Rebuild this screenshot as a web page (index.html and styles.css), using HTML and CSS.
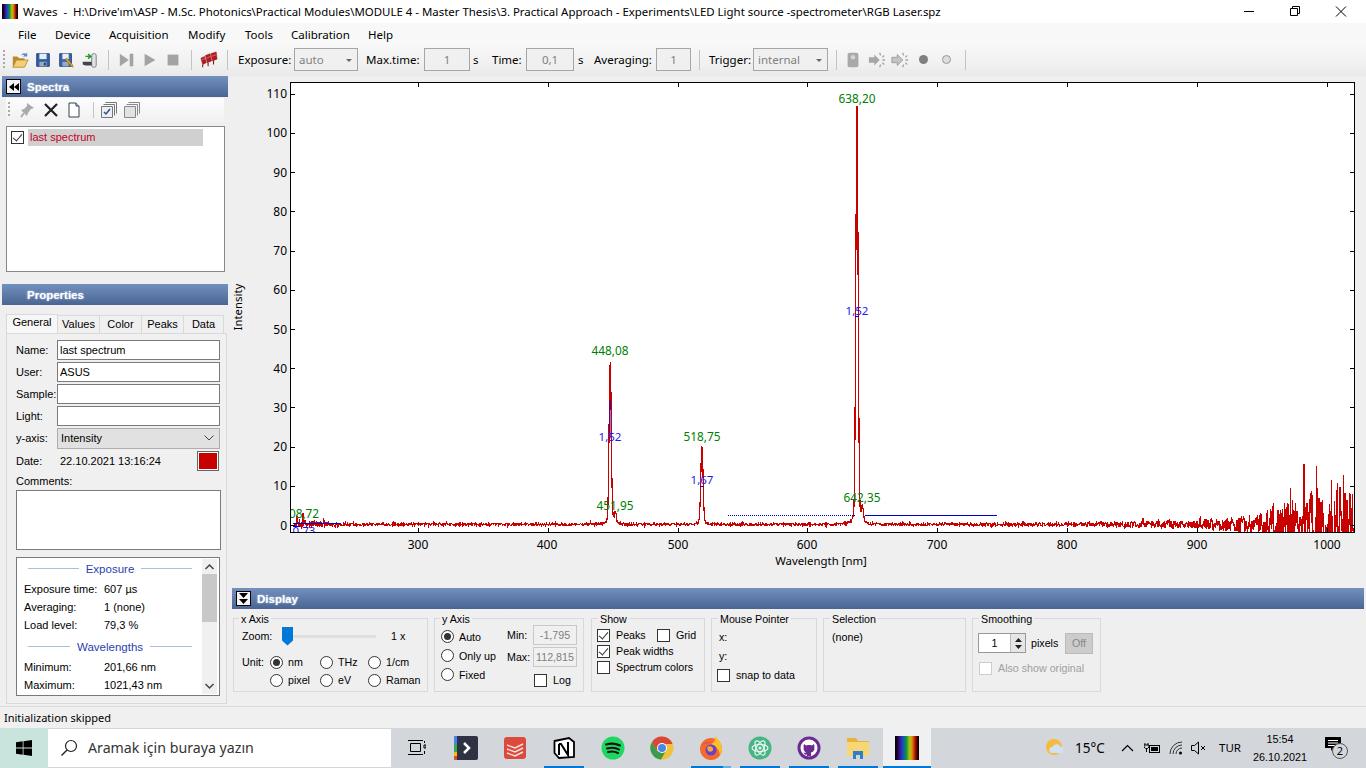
FILE: index.html
```html
<!DOCTYPE html>
<html lang="en">
<head>
<meta charset="utf-8">
<title>Waves</title>
<link rel="stylesheet" href="styles.css">
</head>
<body>
<div class="titlebar">
  <span class="rainbow app-icon"></span>
  <span class="title-text">Waves  -  H:\Drive'ım\ASP - M.Sc. Photonics\Practical Modules\MODULE 4 - Master Thesis\3. Practical Approach - Experiments\LED Light source -spectrometer\RGB Laser.spz</span>
  <div class="win-buttons">
    <svg width="46" height="22" viewBox="0 0 46 22"><path d="M18 10.5h10" stroke="#000" fill="none"/></svg>
    <svg width="46" height="22" viewBox="0 0 46 22"><path d="M18.5 7.5h7v7h-7zM20.5 7.5v-2h7v7h-2" stroke="#000" fill="none"/></svg>
    <svg width="46" height="22" viewBox="0 0 46 22"><path d="M18 5.5l10 10M28 5.5l-10 10" stroke="#000" fill="none"/></svg>
  </div>
</div>
<nav class="menubar">
  <span class="m-file">File</span><span class="m-device">Device</span><span class="m-acq">Acquisition</span><span class="m-mod">Modify</span><span class="m-tools">Tools</span><span class="m-cal">Calibration</span><span>Help</span>
</nav>
<div class="toolbar">
  <span class="grip"></span>
  <svg class="tb-icon first" viewBox="0 0 20 20"><path d="M2 6h5l2 2h6v2H6l-3 7H2z" fill="#b98a2e"/><path d="M6 10h13l-4 8H2z" fill="#f3cf78" stroke="#b98a2e"/><path d="M11 5c2-3 4-3 6-2l1-2v5h-5l2-1c-1-1-2-1-4 0z" fill="#5d87c9"/></svg>
  <svg class="tb-icon" viewBox="0 0 20 20"><path d="M3 3h14v14H3z" fill="#2f5fa8" stroke="#1c3e78"/><path d="M6 3h8v6H6z" fill="#e8eef8"/><path d="M6 12h8v5H6z" fill="#9ab"/><path d="M11 13h2v3h-2z" fill="#234"/></svg>
  <svg class="tb-icon" viewBox="0 0 20 20"><path d="M3 3h13v14H3z" fill="#3d66ac" stroke="#1c3e78"/><path d="M6 3h7v6H6z" fill="#e8eef8"/><path d="M6 12h7v5H6z" fill="#9ab"/><path d="M9 9l7 8 2 1-1-3-6-7z" fill="#e3a92d" stroke="#8a5a10" stroke-width=".6"/></svg>
  <svg class="tb-icon" viewBox="0 0 20 20"><rect x="13" y="3" width="5" height="15" rx="2" fill="#dfe3e6" stroke="#777"/><path d="M3 12h10v4H6l-3-1z" fill="#444"/><path d="M6 6h5M9 3.500l3 2.500-3 2.500" stroke="#1f9a2d" stroke-width="1.600" fill="none"/></svg>
  <span class="sep s1"></span>
  <svg class="tb-icon w-step" viewBox="0 0 20 20"><path d="M2 3l10 7-10 7z" fill="#a3a3a3"/><path d="M13 3h4v14h-4z" fill="#a3a3a3"/></svg>
  <svg class="tb-icon w-play" viewBox="0 0 20 20"><path d="M4 3l12 7-12 7z" fill="#a3a3a3"/></svg>
  <svg class="tb-icon w-stop" viewBox="0 0 20 20"><path d="M4 4h12v12H4z" fill="#a3a3a3"/></svg>
  <span class="sep s2"></span>
  <svg class="tb-icon w-red" viewBox="0 0 20 20"><g fill="#b31a1f" stroke="#7c1014" stroke-width=".5"><path d="M1 8l4-2 2 7-4 2z"/><path d="M6 5l5-2 2 8-5 2z"/><path d="M12 3l6-2 1 8-5 2z"/><path d="M3 15v3M9 13v4M15 11v4" fill="none" stroke-width="1.200"/></g><path d="M2 10l4-2M7 8l5-2M13 6l5-2" stroke="#e9686c"/></svg>
  <span class="sep s3"></span>
  <label class="tb-label l-exp">Exposure:</label>
  <span class="combo c-exp">auto</span>
  <label class="tb-label l-max">Max.time:</label>
  <span class="tb-input i-max">1</span>
  <span class="tb-label l-s1">s</span>
  <label class="tb-label l-time">Time:</label>
  <span class="tb-input i-time">0,1</span>
  <span class="tb-label l-s2">s</span>
  <label class="tb-label l-avg">Averaging:</label>
  <span class="tb-input i-avg">1</span>
  <span class="sep s4"></span>
  <label class="tb-label l-trig">Trigger:</label>
  <span class="combo c-trig">internal</span>
  <span class="sep s5"></span>
  <svg class="tb-icon w-dev" viewBox="0 0 20 20"><rect x="4" y="2" width="12" height="16" rx="2" fill="#a9a9a9"/><circle cx="10" cy="7" r="2.500" fill="#d6d6d6"/></svg>
  <svg class="tb-icon w-sun" viewBox="0 0 20 20"><path d="M1 7h6V4l6 6-6 6v-3H1z" fill="#a6a6a6"/><path d="M13 2l1 3M18 5l-2 2M19 10h-3M18 15l-2-2M13 18l1-3" stroke="#a6a6a6" stroke-width="1.500"/></svg>
  <svg class="tb-icon w-sun2" viewBox="0 0 20 20"><path d="M1 7h6V4l6 6-6 6v-3H1z" fill="#c4c4c4" stroke="#999"/><path d="M13 2l1 3M18 5l-2 2M19 10h-3M18 15l-2-2M13 18l1-3" stroke="#a6a6a6" stroke-width="1.500"/></svg>
  <span class="dot filled"></span>
  <span class="dot hollow"></span>
  <span class="sep s6"></span>
</div>

<main class="workspace">
  <aside class="leftcol">
    <header class="band"><span class="band-btn"><svg width="10" height="8" viewBox="0 0 10 8"><path d="M5 0v8L0 4zM10 0v8L5 4z" fill="#000"/></svg></span>Spectra</header>
    <div class="spectra-tools">
      <span class="grip small"></span>
      <svg class="st-icon" viewBox="0 0 18 18"><path d="M8 2l7 5-3 1-3 4-1 3-6-6 3-1 3-3z" fill="#aaa"/><path d="M5 12l-3 4" stroke="#aaa" stroke-width="2"/></svg>
      <svg class="st-icon" viewBox="0 0 18 18"><path d="M3 3l12 12M15 3L3 15" stroke="#222" stroke-width="2.200"/></svg>
      <svg class="st-icon" viewBox="0 0 18 18"><path d="M4 2h7l3 3v11H4z" fill="#fff" stroke="#345"/><path d="M11 2v3h3" fill="#cde" stroke="#345"/></svg>
      <span class="sep tall"></span>
      <svg class="st-icon" viewBox="0 0 18 18"><path d="M5.500 1.500h11v11M3.500 3.500h11v11" fill="none" stroke="#777"/><path d="M1.500 5.500h11v11h-11z" fill="#eee" stroke="#777"/><path d="M4 11l2 2 4-5" stroke="#2a4fa8" stroke-width="1.500" fill="none"/></svg>
      <svg class="st-icon" viewBox="0 0 18 18"><path d="M5.500 1.500h11v11M3.500 3.500h11v11" fill="none" stroke="#888"/><path d="M1.500 5.500h11v11h-11z" fill="#e2e2e2" stroke="#888"/></svg>
    </div>
    <div class="spectra-list">
      <div class="list-row"><span class="check checked dark"></span><span class="list-name">last spectrum</span></div>
    </div>
    <header class="band props-band"><span class="band-space"></span>Properties</header>
    <div class="tabs">
      <span class="tab active">General</span><span class="tab t-values">Values</span><span class="tab t-color">Color</span><span class="tab t-peaks">Peaks</span><span class="tab t-data">Data</span>
    </div>
    <div class="tab-panel">
      <div class="field"><label>Name:</label><span class="textbox">last spectrum</span></div>
      <div class="field"><label>User:</label><span class="textbox">ASUS</span></div>
      <div class="field"><label>Sample:</label><span class="textbox"></span></div>
      <div class="field"><label>Light:</label><span class="textbox"></span></div>
      <div class="field"><label>y-axis:</label><span class="selectbox">Intensity<svg width="10" height="6" viewBox="0 0 10 6"><path d="M.5.500L5 5 9.500.500" stroke="#444" fill="none"/></svg></span></div>
      <div class="field date-row"><label>Date:</label><span class="date-val">22.10.2021 13:16:24</span><span class="swatch"></span></div>
      <div class="comments-label">Comments:</div>
      <div class="comments"></div>
      <div class="infobox">
        <div class="info-body">
          <div class="info-head">Exposure</div>
          <div class="info-row"><span>Exposure time:</span><span>607 µs</span></div>
          <div class="info-row"><span>Averaging:</span><span>1 (none)</span></div>
          <div class="info-row"><span>Load level:</span><span>79,3 %</span></div>
          <div class="info-head second">Wavelengths</div>
          <div class="info-row"><span>Minimum:</span><span>201,66 nm</span></div>
          <div class="info-row"><span>Maximum:</span><span>1021,43 nm</span></div>
        </div>
        <div class="scrollbar">
          <svg width="15" height="16" viewBox="0 0 15 16"><path d="M3.500 10L7.500 6l4 4" stroke="#444" stroke-width="1.500" fill="none"/></svg>
          <span class="thumb"></span>
          <svg class="sb-down" width="15" height="16" viewBox="0 0 15 16"><path d="M3.500 6l4 4 4-4" stroke="#444" stroke-width="1.500" fill="none"/></svg>
        </div>
      </div>
    </div>
  </aside>

  <section class="rightcol">
    <div class="chart">
      <svg class="plot" width="1136" height="509" viewBox="230 76 1136 509">
        <defs><clipPath id="plotclip"><rect x="291" y="83" width="1063" height="449"/></clipPath></defs>
        <rect x="290.500" y="82.500" width="1064" height="450" fill="#fff"/>
        <g clip-path="url(#plotclip)">
          <path id="spectrum" fill="none" stroke="#c80000" stroke-width="1.200" shape-rendering="crispEdges"/>
          <path d="M728 515.500H855" stroke="#0000d0" stroke-dasharray="1 1" fill="none"/>
          <path d="M865 515.500H997M293 523.500H341M293 526.500H300" stroke="#0000d0" fill="none"/>
          <path d="M610 400.500v38M700.500 486.500h3M855 316.500h4" stroke="#0000d0" fill="none"/>
          <text class="pk" x="304" y="518">08,72</text>
          <text class="fw mid" x="304" y="535">0,73</text>
        </g>
        <path id="axes" fill="none" stroke="#000" shape-rendering="crispEdges"/>
        <rect x="290.500" y="82.500" width="1064" height="450" fill="none" stroke="#000" shape-rendering="crispEdges"/>
        <g class="ylabels">
          <text x="287" y="98">110</text><text x="287" y="137">100</text><text x="287" y="177">90</text><text x="287" y="216">80</text><text x="287" y="255">70</text><text x="287" y="294">60</text><text x="287" y="334">50</text><text x="287" y="373">40</text><text x="287" y="412">30</text><text x="287" y="451">20</text><text x="287" y="490">10</text><text x="287" y="530">0</text>
        </g>
        <g class="xlabels">
          <text x="418" y="549">300</text><text x="547" y="549">400</text><text x="678" y="549">500</text><text x="807" y="549">600</text><text x="937" y="549">700</text><text x="1067" y="549">800</text><text x="1197" y="549">900</text><text x="1327" y="549">1000</text>
        </g>
        <text class="axis-title" x="821" y="565">Wavelength [nm]</text>
        <text class="axis-title" transform="translate(242 307) rotate(-90)">Intensity</text>
        <text class="pk" x="857" y="103">638,20</text>
        <text class="pk" x="610" y="355">448,08</text>
        <text class="pk" x="702" y="441">518,75</text>
        <text class="pk" x="615" y="510">451,95</text>
        <text class="pk" x="862" y="502">642,35</text>
        <text class="fw mid" x="857" y="315">1,52</text>
        <text class="fw mid" x="610" y="441">1,52</text>
        <text class="fw mid" x="702" y="484">1,67</text>
      </svg>
    </div>
    <header class="band display-band"><span class="band-btn"><svg width="9" height="11" viewBox="0 0 9 11"><path d="M0 0h9L4.500 5zM0 6h9l-4.500 5z" fill="#000"/></svg></span>Display</header>
    <div class="groups">
      <fieldset class="group g-x">
        <legend>x Axis</legend>
        <div class="zoom-row"><span class="z-label">Zoom:</span><span class="slider"><span class="slider-thumb"></span></span><span>1 x</span></div>
        <div class="unit-grid">
          <span>Unit:</span>
          <span class="opt"><span class="radio on"></span>nm</span>
          <span class="opt"><span class="radio"></span>THz</span>
          <span class="opt"><span class="radio"></span>1/cm</span>
          <span></span>
          <span class="opt"><span class="radio"></span>pixel</span>
          <span class="opt"><span class="radio"></span>eV</span>
          <span class="opt"><span class="radio"></span>Raman</span>
        </div>
      </fieldset>
      <fieldset class="group g-y">
        <legend>y Axis</legend>
        <div class="y-inner">
          <div class="y-radios">
            <span class="opt"><span class="radio on"></span>Auto</span>
            <span class="opt"><span class="radio"></span>Only up</span>
            <span class="opt"><span class="radio"></span>Fixed</span>
          </div>
          <div class="y-range">
            <span>Min:</span><span class="range-val">-1,795</span>
            <span>Max:</span><span class="range-val">112,815</span>
            <span></span><span class="opt log"><span class="check"></span>Log</span>
          </div>
        </div>
      </fieldset>
      <fieldset class="group g-show">
        <legend>Show</legend>
        <div class="show-inner">
          <div class="show-row"><span class="opt o-peaks"><span class="check checked"></span>Peaks</span><span class="opt o-grid"><span class="check"></span>Grid</span></div>
          <div class="show-row"><span class="opt o-peaks"><span class="check checked"></span>Peak widths</span></div>
          <div class="show-row"><span class="opt"><span class="check"></span>Spectrum colors</span></div>
        </div>
      </fieldset>
      <fieldset class="group g-mouse">
        <legend>Mouse Pointer</legend>
        <div class="m-x">x:</div>
        <div class="m-y">y:</div>
        <span class="opt m-snap"><span class="check"></span>snap to data</span>
      </fieldset>
      <fieldset class="group g-sel">
        <legend>Selection</legend>
        <div class="sel-val">(none)</div>
      </fieldset>
      <fieldset class="group g-smooth">
        <legend>Smoothing</legend>
        <div class="smooth-row">
          <span class="spinner"><span class="spin-val">1</span><span class="spin-btns"><svg width="7" height="4" viewBox="0 0 7 4"><path d="M0 4h7L3.500 0z" fill="#222"/></svg><svg width="7" height="4" viewBox="0 0 7 4"><path d="M0 0h7L3.500 4z" fill="#222"/></svg></span></span>
          <span class="pixels">pixels</span>
          <span class="off-btn">Off</span>
        </div>
        <span class="opt also"><span class="check disabled"></span>Also show original</span>
      </fieldset>
    </div>
  </section>
</main>

<div class="statusbar">Initialization skipped</div>

<footer class="taskbar">
  <div class="start"><svg width="16" height="16" viewBox="0 0 16 16"><path d="M0 2.300l6.700-1v6.300H0zM7.500 1.200L16 0v7.600H7.500zM0 8.400h6.700v6.300l-6.700-1zM7.500 8.400H16V16l-8.500-1.200z" fill="#000"/></svg></div>
  <div class="search">
    <svg width="18" height="18" viewBox="0 0 18 18"><circle cx="11" cy="7" r="5.500" fill="none" stroke="#222" stroke-width="1.200"/><path d="M7 11l-5.500 5.500" stroke="#222" stroke-width="1.500"/></svg>
    <span>Aramak için buraya yazın</span>
  </div>
  <div class="tasks">
    <span class="task"><svg width="18" height="16" viewBox="0 0 18 16"><path d="M2.500 3.500h10v8h-10zM0 .500h15M0 14.500h15M16 5h2v3h-2z" fill="none" stroke="#000"/><path d="M16.500 1v2M16.500 11v3" stroke="#000"/></svg></span>
    <span class="task"><svg width="24" height="24" viewBox="0 0 24 24"><rect width="24" height="24" rx="2" fill="#2f3243"/><path d="M0 2a2 2 0 012-2h1v8H0z" fill="#4285f4"/><path d="M0 8h3v8H0z" fill="#34a853"/><path d="M0 16h3v4H0z" fill="#fbbc05"/><path d="M0 20h3v4H2a2 2 0 01-2-2z" fill="#ea4335"/><path d="M10 7l5 5-5 5" stroke="#fff" stroke-width="2.500" fill="none"/></svg></span>
    <span class="task"><svg width="22" height="22" viewBox="0 0 22 22"><rect width="22" height="22" rx="3" fill="#dc4a3e"/><path d="M3 8l8 3 8-4M3 12l8 3 8-4M3 16l8 3 8-4" stroke="#f6e4e0" stroke-width="1.400" fill="none"/></svg></span>
    <span class="task run"><svg width="22" height="22" viewBox="0 0 22 22"><path d="M1.500 4L16 1l5 4v15L6 21l-4.500-5z" fill="#fff" stroke="#000" stroke-width="1.800"/><path d="M6 7v11M6 7h2l7 11V5" stroke="#000" stroke-width="2" fill="none"/></svg></span>
    <span class="task"><svg width="24" height="24" viewBox="0 0 24 24"><circle cx="12" cy="12" r="11.500" fill="#1ed760"/><path d="M5 8.500c5-1.400 10-1 14 1M6 12.500c4-1 9-.7 12 1M7 16c3-.7 7-.5 10 1" stroke="#111" stroke-width="2" fill="none" stroke-linecap="round"/></svg></span>
    <span class="task"><svg width="24" height="24" viewBox="0 0 24 24"><circle cx="12" cy="12" r="11.500" fill="#eec33a"/><path d="M12 .500A11.500 11.500 0 002 6l5 9 5-7h10.500A11.500 11.500 0 0012 .500z" fill="#d9473b"/><path d="M2 6a11.500 11.500 0 009 17.500l4-7-8-1.500z" fill="#3a9b4d"/><circle cx="12" cy="12" r="5" fill="#fff"/><circle cx="12" cy="12" r="4" fill="#4a86e8"/></svg></span>
    <span class="task run split"><svg width="24" height="24" viewBox="0 0 24 24"><circle cx="12" cy="13" r="11" fill="#f36a2b"/><path d="M16 0c3 3 7 7 7 13 0 2-1 4-2 6-1-6-4-9-9-11 3-1 5-4 4-8z" fill="#fbbf2c"/><path d="M3 9c3-4 7-3 10-3-2 2-6 1-10 3z" fill="#e84c6c"/><circle cx="12" cy="14" r="5.500" fill="#6b3fc9"/><path d="M8 11c3-2 7 0 6 3-1 2-3 2-5 1z" fill="#f8a63c"/></svg></span>
    <span class="task run"><svg width="24" height="24" viewBox="0 0 24 24"><circle cx="12" cy="12" r="11.500" fill="#45b583"/><g fill="none" stroke="#e8f6ef" stroke-width="1.200"><ellipse cx="12" cy="12" rx="8" ry="3.500" transform="rotate(60 12 12)"/><ellipse cx="12" cy="12" rx="8" ry="3.500" transform="rotate(-60 12 12)"/><ellipse cx="12" cy="12" rx="8" ry="3.500"/></g><circle cx="12" cy="12" r="1.600" fill="#e8f6ef"/></svg></span>
    <span class="task run"><svg width="24" height="24" viewBox="0 0 24 24"><circle cx="12" cy="12" r="11.500" fill="#6a2c91"/><circle cx="12" cy="12" r="8.500" fill="#fff"/><path d="M7 8l2 1.500c2-.6 4-.6 6 0L17 8c.5 1.500.5 2.500.3 3.500.7 3-1.300 4.500-3.300 5v3.500h-4v-1.500c-2 .5-3-.5-3.500-2l2 .5.500-.5C7.500 15.500 6 14 6.700 11.500 6.500 10.500 6.500 9.500 7 8z" fill="#6a2c91"/></svg></span>
    <span class="task run"><svg width="24" height="22" viewBox="0 0 24 22"><path d="M1 1h9l2 3h11v4H1z" fill="#e5b53b"/><path d="M1 5h22v14H1z" fill="#f7d774"/><path d="M7 14h10v8h-3v-4h-4v4H7z" fill="#2c7fd0"/></svg></span>
    <span class="task run active"><span class="rainbow tb-rainbow"></span></span>
  </div>
  <div class="tray">
    <svg class="weather" width="20" height="20" viewBox="0 0 20 20"><circle cx="9" cy="9" r="8" fill="#f6ba3e"/><path d="M7 15a3 3 0 01.500-6 4 4 0 017.500-.500A3.300 3.300 0 0116 15z" fill="#cfe1f2"/></svg>
    <span class="temp">15°C</span>
    <svg class="chev" width="13" height="8" viewBox="0 0 13 8"><path d="M1 7l5.500-5.500L12 7" stroke="#000" fill="none" stroke-width="1.200"/></svg>
    <svg class="batt" width="16" height="12" viewBox="0 0 16 12"><path d="M1 1v2M4 1v2M0 3h5v2l-1.500 1.500h-2L0 5zM2.500 6v4" stroke="#000" fill="none"/><rect x="5.500" y="3.500" width="10" height="7" fill="none" stroke="#000"/><rect x="7" y="5" width="7" height="4"/></svg>
    <svg class="wifi" width="15" height="14" viewBox="0 0 15 14"><path d="M1 13A12 12 0 0113 1M4 13a9 9 0 019-9M7 13a6 6 0 016-6" stroke="#333" fill="none"/><circle cx="11.500" cy="12" r="1.500"/></svg>
    <svg class="vol" width="16" height="14" viewBox="0 0 16 14"><path d="M.500 4.500h3l4-3.500v12l-4-3.500h-3z" fill="none" stroke="#000"/><path d="M10 5l4 4M14 5l-4 4" stroke="#000"/></svg>
    <span class="lang">TUR</span>
    <div class="clock"><span>15:54</span><span>26.10.2021</span></div>
    <div class="notif"><svg width="16" height="14" viewBox="0 0 16 14"><path d="M0 0h16v11H8l-2 3v-3H0z"/><path d="M3 3.500h10M3 6h10M3 8.500h7" stroke="#fff"/></svg><span class="notif-badge">2</span></div>
  </div>
</footer>
<script src="chart.js"></script>
</body>
</html>
```

FILE: styles.css
```css
* { box-sizing: border-box; }
html, body { margin: 0; padding: 0; }
body {
  width: 1366px; height: 768px; overflow: hidden;
  background: #efefef; color: #000;
  font: 11.5px/14px "Noto Sans", "Liberation Sans", sans-serif;
  display: flex; flex-direction: column;
}
.titlebar { height: 23px; background: #fff; display: flex; align-items: center; padding-left: 2px; white-space: pre; font-size: 11.43px; flex: none; }
.rainbow { display: block; background: linear-gradient(90deg, #000 0, #1a0033 10%, #3a1a9c 22%, #1650c0 34%, #0f9a33 48%, #a8c010 60%, #d89a08 70%, #c41c08 82%, #400 92%, #000 100%); }
.app-icon { width: 16px; height: 15px; margin-right: 5px; }
.title-text { flex: 1; }
.win-buttons { display: flex; padding-right: 2px; }
.menubar { height: 23px; background: #f8f8f8; display: flex; align-items: center; padding-left: 18px; flex: none; }
.m-file { width: 37px; } .m-device { width: 54px; } .m-acq { width: 79px; } .m-mod { width: 57px; } .m-tools { width: 46px; } .m-cal { width: 77px; }
.toolbar { height: 30px; background: linear-gradient(#f7f7f7, #f1f1f1 60%, #e9e9e9); display: flex; align-items: center; padding: 0 0 3px 3px; flex: none; }
.grip { width: 3px; height: 20px; background-image: linear-gradient(#aaa 50%, transparent 50%); background-size: 2px 4px; background-repeat: repeat-y; }
.grip.small { height: 16px; margin-right: 8px; flex: none; }
.tb-icon { width: 18px; height: 18px; margin-left: 5px; flex: none; }
.tb-icon.first { margin-left: 5px; }
.sep { width: 1px; height: 20px; background: #c4c4c4; flex: none; }
.sep.tall { height: 16px; margin: 0 6px 0 5px; }
.s1 { margin-left: 10px; }
.w-step { margin-left: 9px; } .w-stop { margin-left: 5px; }
.s2 { margin-left: 9px; }
.w-red { margin-left: 8px; }
.s3 { margin-left: 9px; }
.tb-label { flex: none; white-space: nowrap; }
.l-exp { margin-left: 10px; width: 56px; }
.combo { flex: none; height: 23px; border: 1px solid #a6a6a6; background: #f0f0f0; color: #808080; line-height: 22px; padding-left: 4px; position: relative; }
.combo::after { content: ""; position: absolute; right: 5px; top: 10px; border: 3px solid transparent; border-top: 3px solid #666; }
.c-exp { width: 64px; }
.l-max { margin-left: 8px; width: 58px; }
.tb-input { flex: none; height: 23px; border: 1px solid #a6a6a6; background: #f0f0f0; color: #808080; line-height: 21px; text-align: center; }
.i-max { width: 46px; }
.l-s1 { margin-left: 3px; width: 19px; }
.l-time { width: 34px; }
.i-time { width: 48px; }
.l-s2 { margin-left: 4px; width: 16px; }
.l-avg { width: 62px; }
.i-avg { width: 35px; }
.s4 { margin-left: 8px; }
.l-trig { margin-left: 9px; width: 44px; }
.c-trig { width: 75px; }
.s5 { margin-left: 8px; }
.w-dev { margin-left: 7px; } .w-sun { margin-left: 6px; } .w-sun2 { margin-left: 5px; }
.dot { flex: none; width: 9px; height: 9px; border-radius: 50%; }
.dot.filled { background: #808080; margin-left: 10px; }
.dot.hollow { background: #ddd; border: 1px solid #999; margin-left: 14px; }
.s6 { margin-left: 14px; }

.workspace { flex: none; height: 630px; display: flex; }
.leftcol { width: 230px; flex: none; padding-left: 2px; display: flex; flex-direction: column; font: 11px/14px "Liberation Sans", sans-serif; }
.rightcol { flex: 1; display: flex; flex-direction: column; }
.band { flex: none; height: 21px; background: linear-gradient(#7290c0, #4a6591); color: #fff; font: 700 11.5px/14px "Liberation Sans", sans-serif; display: flex; align-items: center; text-shadow: 0 0 2px #c9d6ee; padding-left: 4px; }
.leftcol .band { width: 226px; }
.band-btn { width: 15px; height: 15px; background: #f4f4f4; border: 1px solid #000; display: flex; align-items: center; justify-content: center; margin-right: 6px; }
.band-space { width: 21px; }
.spectra-tools { margin: 1px 0 0 4px; width: 218px; height: 24px; background: linear-gradient(#fdfdfd, #f1f1f1); display: flex; align-items: center; padding-left: 2px; }
.st-icon { width: 18px; height: 18px; margin-right: 5px; flex: none; }
.spectra-list { margin: 4px 0 0 4px; width: 219px; height: 146px; background: #fff; border: 1px solid #828790; padding: 2px 0 0 4px; }
.list-row { display: flex; align-items: center; height: 17px; }
.list-row .check { margin-right: 5px; }
.list-name { width: 175px; height: 17px; margin-left: -1px; padding-left: 2px; background: #d0d0d0; color: #c8001e; line-height: 17px; }
.props-band { margin-top: 12px; }
.tabs { display: flex; height: 19px; margin: 9px 0 0 5px; align-items: flex-end; }
.tab { width: 42px; height: 18px; background: #f0f0f0; border: 1px solid #d9d9d9; border-bottom: 0; border-left: 0; text-align: center; line-height: 17px; }
.tab.active { width: 52px; height: 19px; margin-left: -1px; border-left: 1px solid #d9d9d9; background: #f7f7f7; line-height: 15px; }
.t-data { width: 40px; }
.tab-panel { margin-left: 4px; width: 221px; height: 371px; border: 1px solid #d9d9d9; background: #f0f0f0; padding: 5px 0 0 9px; }
.field { display: flex; align-items: center; height: 22px; }
.field label { width: 41px; flex: none; white-space: nowrap; }
.textbox { width: 163px; height: 20px; background: #fff; border: 1px solid #7a7a7a; padding-left: 2px; line-height: 18px; }
.selectbox { width: 163px; height: 21px; background: #e1e1e1; border: 1px solid #adadad; padding: 0 5px 0 3px; display: flex; align-items: center; justify-content: space-between; }
.date-row { height: 23px; }
.date-val { margin-left: 3px; width: 137px; }
.swatch { width: 22px; height: 20px; background: #c80000; border: 1px solid #666; box-shadow: inset 0 0 0 1px #fff; }
.comments-label { margin-top: 2px; height: 14px; }
.comments { margin-top: 2px; width: 205px; height: 60px; background: #fff; border: 1px solid #7a7a7a; }
.infobox { margin-top: 7px; width: 204px; height: 139px; background: #fff; border: 1px solid #7a7a7a; display: flex; }
.info-body { width: 185px; flex: none; padding: 2px 0 0 7px; }
.info-head { width: 164px; margin-left: 4px; height: 17px; color: #2a3fb0; display: flex; align-items: center; gap: 7px; justify-content: center; white-space: nowrap; font-size: 11.5px; }
.info-head::before, .info-head::after { content: ""; flex: 1; height: 1px; background: #a8bde8; }
.info-head.second { margin-top: 4px; }
.info-row { display: flex; height: 18px; align-items: center; white-space: nowrap; }
.info-row span:first-child { width: 80px; flex: none; }
.info-head + .info-row { margin-top: 3px; }
.scrollbar { width: 15px; flex: none; background: #f0f0f0; display: flex; flex-direction: column; margin: 1px 0; }
.thumb { display: block; height: 48px; background: #c8c8c8; margin-top: -1px; }
.sb-down { margin-top: auto; }

.chart { height: 509px; flex: none; }
.plot { display: block; }
.plot text { font-family: "Noto Sans", "Liberation Sans", sans-serif; font-size: 12px; }
.ylabels text { text-anchor: end; }
.xlabels text, .axis-title { text-anchor: middle; }
.plot .axis-title { font-size: 11.4px; }
.plot .pk { fill: #008000; font-size: 11.8px; text-anchor: middle; }
.plot .fw { fill: #1a1af0; font-size: 11.5px; text-anchor: middle; }
.display-band { margin: 3px 0 0 2px; width: 1132px; }
.groups { display: flex; height: 97px; padding: 3px 0 0 3px; font: 10.7px/14px "Liberation Sans", sans-serif; }
.group { margin: 0 6px 0 0; padding: 0 0 0 8px; height: 80px; border: 1px solid #d9d9d9; min-width: 0; flex: none; }
.group legend { padding: 0 2px; margin-left: -1px; height: 13px; line-height: 15px; }
.opt { display: flex; align-items: center; white-space: nowrap; }
.radio { width: 13px; height: 13px; border-radius: 50%; border: 1px solid #333; background: #fff; margin-right: 5px; flex: none; position: relative; }
.radio.on::after { content: ""; position: absolute; inset: 2px; border-radius: 50%; background: #333; }
.check { width: 13px; height: 13px; border: 1px solid #333; background: #fff; margin-right: 6px; flex: none; position: relative; display: inline-block; }
.check.checked::after { content: ""; position: absolute; left: 3px; top: 0; width: 4px; height: 8px; border: solid #333; border-width: 0 1px 1px 0; transform: rotate(40deg); }
.check.disabled { border-color: #ccc; }
.g-x { width: 195px; }
.g-x legend { margin-left: -3px; }
.zoom-row { display: flex; align-items: center; height: 22px; margin-bottom: 6px; }
.z-label { width: 40px; }
.slider { width: 94px; height: 3px; background: #e0e0e0; margin-right: 15px; position: relative; border: 0; }
.slider-thumb { position: absolute; left: 0; top: -8px; width: 11px; height: 19px; background: #0078d7; clip-path: polygon(0 0, 100% 0, 100% 74%, 50% 100%, 0 74%); }
.unit-grid { display: grid; grid-template-columns: 28px 50px 48px 1fr; grid-auto-rows: 18px; align-items: center; }
.g-y { width: 150px; padding-left: 6px; margin-right: 7px; }
.y-inner { display: flex; }
.y-radios { width: 66px; flex: none; display: grid; grid-template-rows: repeat(3, 19px); align-items: center; padding-top: 2px; }
.y-range { display: grid; grid-template-columns: 26px 44px; grid-template-rows: 20px 20px 22px; row-gap: 2px; align-items: center; }
.range-val { height: 20px; border: 1px solid #c8c8c8; background: #f0f0f0; color: #808080; text-align: center; line-height: 18px; white-space: nowrap; overflow: hidden; }
.log { padding-left: 1px; }
.g-show { width: 114px; padding-left: 5px; }
.g-show legend { margin-left: 1px; }
.show-inner { padding-top: 2px; }
.show-row { display: flex; height: 16px; align-items: center; }
.o-peaks { width: 60px; }
.g-mouse { width: 106px; padding-left: 7px; }
.g-mouse legend { margin-left: -1px; }
.m-x { height: 24px; line-height: 24px; }
.m-y { height: 14px; line-height: 14px; }
.m-snap { margin-left: -2px; height: 18px; margin-top: 3px; }
.g-sel { width: 143px; }
.g-sel legend { margin-left: -2px; }
.sel-val { height: 24px; line-height: 24px; }
.g-smooth { width: 129px; padding-left: 5px; }
.g-smooth legend { margin-left: 1px; }
.smooth-row { display: flex; align-items: center; margin-top: 7px; height: 22px; }
.spinner { width: 48px; height: 20px; border: 1px solid #999; background: #fff; display: flex; }
.spin-val { flex: 1; text-align: center; line-height: 18px; }
.spin-btns { width: 15px; background: #e6e6e6; display: flex; flex-direction: column; align-items: center; justify-content: space-around; padding: 2px 0; border-left: 1px solid #bbb; }
.pixels { margin-left: 5px; width: 34px; }
.off-btn { width: 28px; height: 21px; background: #ccc; border: 1px solid #bbb; color: #888; text-align: center; line-height: 19px; }
.also { margin: 5px 0 0 1px; color: #a0a0a0; height: 18px; }

.statusbar { height: 22px; flex: none; border-top: 1px solid #d9d9d9; padding-left: 4px; line-height: 21px; background: #f0f0f0; font-size: 11px; }
.taskbar { height: 40px; flex: none; background: #d3d6db; display: flex; align-items: stretch; }
.start { width: 48px; background: #c9e4dc; display: flex; align-items: center; justify-content: center; }
.search { width: 343px; margin: 1px 0; background: #fff; display: flex; align-items: center; gap: 10px; padding-left: 12px; font-size: 14.2px; color: #333; }
.search svg { margin-top: -1px; }
.tasks { display: flex; padding-left: 1px; margin-left: 0; }
.task { width: 49px; display: flex; align-items: center; justify-content: center; position: relative; }
.task.run::after { content: ""; position: absolute; left: 5px; right: 4px; bottom: 0; height: 2px; background: #0078d7; }
.task.split::after { background: linear-gradient(90deg, #0078d7 80%, #6aaee6 80%); }
.task.active { background: #eff0f2; width: 48px; margin-left: 1px; }
.task.active::after { left: 0; right: 0; }
.tb-rainbow { width: 24px; height: 24px; }
.tray { flex: 1; display: flex; align-items: center; position: relative; font-size: 12px; }
.weather { margin-left: 114px; }
.temp { margin-left: 10px; font-size: 13.5px; width: 37px; }
.chev { margin-left: 9px; }
.batt { margin-left: 10px; }
.wifi { margin-left: 9px; }
.vol { margin-left: 7px; }
.lang { margin-left: 12px; width: 30px; font-size: 11.5px; }
.clock { margin-left: 1px; width: 60px; display: flex; flex-direction: column; align-items: center; font: 10.8px/18px "Liberation Sans", sans-serif; margin-top: -1px; }
.notif { margin-left: 15px; position: relative; width: 20px; height: 20px; margin-top: -2px; }
.notif-badge { position: absolute; left: 7px; top: 6px; width: 16px; height: 16px; border-radius: 50%; border: 1px solid #555; background: #d3d6db; font-size: 11px; line-height: 14px; text-align: center; }
```

FILE: chart.js
```js
(function () {
  var seed = 12345;
  function rnd() { seed = (seed * 1664525 + 1013904223) % 4294967296; return seed / 4294967296; }
  function X(w) { return 418 + (w - 300) * 1.298; }
  function Y(v) { return 525 - v * 3.92; }
  var peaks = [[638.2, 106.5, .85], [448.08, 42, .8], [518.75, 20, .85], [451.95, 3, .8], [642.35, 4.2, .7]];
  function lerp(a, b, t) { return a + (b - a) * t; }
  function amp(w) {
    if (w < 222) return 1.6;
    if (w < 250) return lerp(1.1, .4, (w - 222) / 28);
    if (w < 700) return .4;
    if (w < 800) return lerp(.4, .6, (w - 700) / 100);
    if (w < 900) return lerp(.6, 1.5, (w - 800) / 100);
    if (w < 950) return lerp(1.5, 3.5, (w - 900) / 50);
    if (w < 990) return lerp(3.5, 8, (w - 950) / 40);
    return lerp(8, 13, (w - 990) / 31);
  }
  var d = [];
  for (var w = 205; w < 1021.5; w += .4) {
    var a = amp(w), r = rnd(), v = .15 + (r - .5) * 2 * a * .8;
    if (rnd() < .05) v += a * 1.3 * rnd();
    if (w > 950) v = (rnd() < .35 ? -1.8 : v + a * .3);
    peaks.forEach(function (p) {
      var q = (w - p[0]) / p[2];
      v += p[1] * (.93 * Math.exp(-q * q / 2) + .07 / (1 + q * q / 4));
    });
    d.push((d.length ? "L" : "M") + X(w).toFixed(1) + " " + Y(v).toFixed(1));
  }
  document.getElementById("spectrum").setAttribute("d", d.join(""));
  var t = "", i;
  for (i = 0; i <= 110; i += 10) {
    var y = Math.round(Y(i)) + .5;
    t += "M291 " + y + "h4M1354 " + y + "h-4";
  }
  for (i = 300; i <= 1000; i += 100) {
    var x = Math.round(X(i)) + .5;
    t += "M" + x + " 83v4M" + x + " 532v-4";
  }
  document.getElementById("axes").setAttribute("d", t);
})();
```
